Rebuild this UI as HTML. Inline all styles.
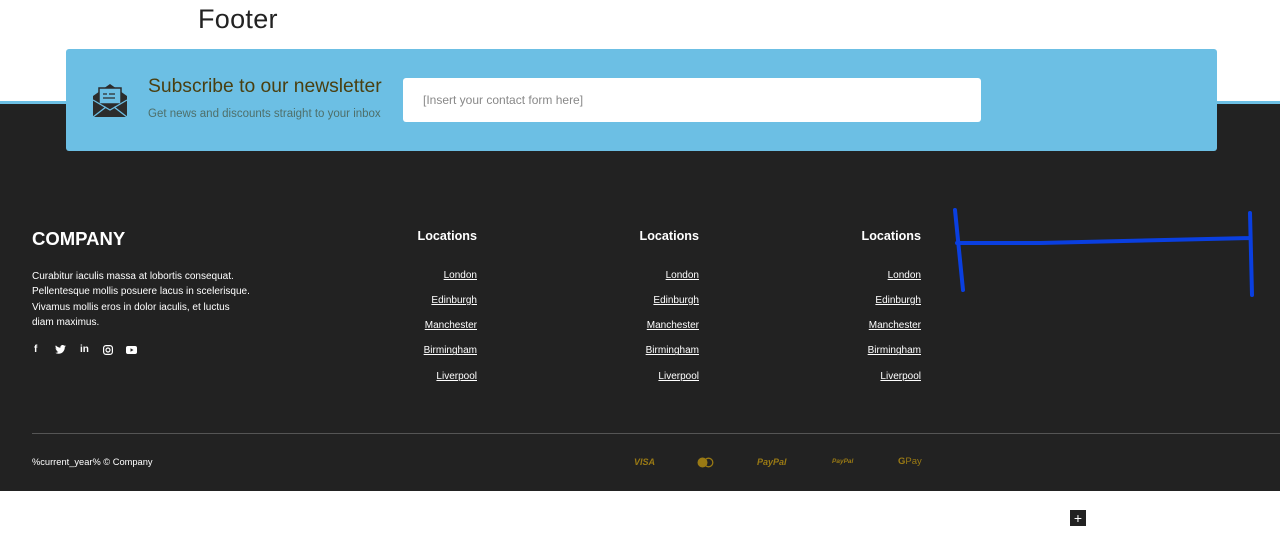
<!DOCTYPE html>
<html><head><style>
*{margin:0;padding:0;box-sizing:border-box}
body{width:1280px;height:559px;background:#fff;font-family:"Liberation Sans",sans-serif;position:relative;overflow:hidden}
.abs{position:absolute}
.loc{position:absolute;text-align:right;color:#fff;font-size:10px;width:120px}
.loc h4{font-size:12.6px;font-weight:bold;margin-bottom:20px;line-height:1}
.loc a{display:block;color:#fff;text-decoration:underline;line-height:25.3px}
</style></head><body>
<div class="abs" style="left:198px;top:4px;font-size:27px;color:#222;letter-spacing:0.3px">Footer</div>
<div class="abs" style="left:0;top:101px;width:1280px;height:3px;background:#6cbfe4"></div>
<div class="abs" style="left:0;top:104px;width:1280px;height:387px;background:#222"></div>
<div class="abs" style="left:66px;top:49px;width:1151px;height:102px;background:#6cbfe4;border-radius:3px"></div>
<svg class="abs" style="left:92px;top:82px" width="36" height="36" viewBox="0 0 36 36">
<path d="M1 14 L18 2 L35 14 V35 H1 Z" fill="#2c2c2c"/>
<rect x="7" y="6" width="22" height="16" fill="#6cbfe4" stroke="#2c2c2c" stroke-width="1.5"/>
<path d="M11 12h4M17 12h6M11 16h12" stroke="#2c2c2c" stroke-width="1.3"/>
<path d="M1 18 L18 28 L35 18 M1 35 L14 25 M35 35 L22 25" stroke="#6cbfe4" stroke-width="1.3" fill="none"/>
</svg>
<div class="abs" style="left:148px;top:76px;font-size:19.3px;color:#4a3f10">Subscribe to our newsletter</div>
<div class="abs" style="left:148px;top:108px;font-size:11.5px;color:#4e6f6a">Get news and discounts straight to your inbox</div>
<div class="abs" style="left:403px;top:78px;width:578px;height:44px;background:#fff;border-radius:3px;font-size:12px;color:#888;padding:15px 20px">[Insert your contact form here]</div>
<div class="abs" style="left:32px;top:228px;font-size:18.5px;color:#fff;font-weight:bold">COMPANY</div>
<div class="abs" style="left:32px;top:269px;font-size:10px;color:#fff;line-height:15.3px;width:220px">Curabitur iaculis massa at lobortis consequat. Pellentesque mollis posuere lacus in scelerisque. Vivamus mollis eros in dolor iaculis, et luctus diam maximus.</div>
<div class="abs" style="left:33px;top:344px;font-size:10px;color:#fff;font-weight:bold;letter-spacing:0">
<span style="position:absolute;left:1px">f</span>
<svg style="position:absolute;left:22px;top:1px" width="11" height="9" viewBox="0 0 24 20"><path d="M24 2.4a10 10 0 0 1-2.8.8A5 5 0 0 0 23.3.4a10 10 0 0 1-3.1 1.2A4.9 4.9 0 0 0 11.8 6 14 14 0 0 1 1.7.9a4.9 4.9 0 0 0 1.5 6.6A4.9 4.9 0 0 1 1 6.9a4.9 4.9 0 0 0 3.9 4.8 5 5 0 0 1-2.2.1 4.9 4.9 0 0 0 4.6 3.4A9.9 9.9 0 0 1 0 17.3 14 14 0 0 0 7.5 19.5c9.1 0 14-7.5 14-14v-.6A10 10 0 0 0 24 2.4z" fill="#fff"/></svg>
<span style="position:absolute;left:47px">in</span>
<svg style="position:absolute;left:70px;top:1px" width="10" height="10" viewBox="0 0 10 10"><rect x=".6" y=".6" width="8.8" height="8.8" rx="2.5" fill="none" stroke="#fff" stroke-width="1.2"/><circle cx="5" cy="5" r="2" fill="none" stroke="#fff" stroke-width="1.2"/></svg>
<svg style="position:absolute;left:93px;top:2px" width="11" height="8" viewBox="0 0 11 8"><rect width="11" height="8" rx="2" fill="#fff"/><path d="M4.5 2.2v3.6L7.5 4z" fill="#222"/></svg>
</div>
<div class="loc" style="left:357px;top:230px"><h4>Locations</h4><a>London</a><a>Edinburgh</a><a>Manchester</a><a>Birmingham</a><a>Liverpool</a></div>
<div class="loc" style="left:579px;top:230px"><h4>Locations</h4><a>London</a><a>Edinburgh</a><a>Manchester</a><a>Birmingham</a><a>Liverpool</a></div>
<div class="loc" style="left:801px;top:230px"><h4>Locations</h4><a>London</a><a>Edinburgh</a><a>Manchester</a><a>Birmingham</a><a>Liverpool</a></div>
<svg class="abs" style="left:950px;top:205px" width="320" height="95"><path d="M5 5 L13 85 M7 38 L90 38 L300 33 M300 8 L302 90" stroke="#0a3fe0" stroke-width="4" fill="none" stroke-linecap="round"/></svg>
<div class="abs" style="left:32px;top:433px;width:1248px;height:1px;background:#555"></div>
<div class="abs" style="left:32px;top:457px;font-size:9.3px;color:#fff">%current_year% © Company</div>
<div class="abs" style="left:634px;top:457px;font-size:9px;color:#9a7a14;font-weight:bold;font-style:italic">VISA</div>
<svg class="abs" style="left:697px;top:457px" width="18" height="11"><circle cx="5.5" cy="5.5" r="5" fill="#9a7a14"/><circle cx="11.5" cy="5.5" r="4.3" fill="none" stroke="#9a7a14" stroke-width="1.3"/></svg>
<div class="abs" style="left:757px;top:457px;font-size:9px;color:#9a7a14;font-weight:bold;font-style:italic">PayPal</div>
<div class="abs" style="left:832px;top:458px;font-size:6.5px;color:#9a7a14;font-weight:bold;font-style:italic">PayPal</div>
<div class="abs" style="left:898px;top:456px;font-size:9.5px;color:#9a7a14"><b>G</b>Pay</div>
<div class="abs" style="left:1070px;top:510px;width:16px;height:16px;background:#222;color:#fff;font-size:14px;line-height:16px;text-align:center">+</div>
</body></html>
